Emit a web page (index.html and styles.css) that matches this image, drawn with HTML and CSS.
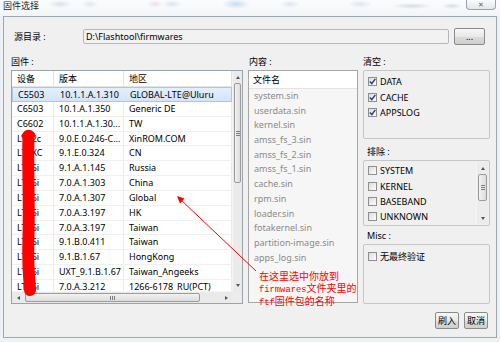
FILE: index.html
```html
<html>
    <head>
        <title>固件选择</title>
        <link rel="stylesheet" href="styles.css">
    </head>
    <body>
        <div class="window">
            <div class="titlebar">
                <span class="title">固件选择</span>
                <span class="close">✕</span>
            </div>
            <div class="panel">
                <div class="source_row">
                    <span class="source_label">源目录 :</span>
                    <div class="field">D:\Flashtool\firmwares</div>
                    <button class="btn browse">...</button>
                </div>

                <div class="columns">
                    <div class="col">
                        <div class="caption">固件 :</div>
                        <div class="fw_table">
                            <div class="fw_body">
                                <div class="fw_row fw_head"><span>设备</span><span>版本</span><span>地区</span></div>
                                <div class="fw_row selected"><span>C5503</span><span>10.1.1.A.1.310</span><span>GLOBAL-LTE@Uluru</span></div>
                                <div class="fw_row"><span>C6503</span><span>10.1.A.1.350</span><span>Generic DE</span></div>
                                <div class="fw_row"><span>C6602</span><span>10.1.1.A.1.30...</span><span>TW</span></div>
                                <div class="fw_row"><span>LT22c</span><span>9.0.E.0.246-C...</span><span>XinROM.COM</span></div>
                                <div class="fw_row"><span>LT2XC</span><span>9.1.E.0.324</span><span>CN</span></div>
                                <div class="fw_row"><span>LT26i</span><span>9.1.A.1.145</span><span>Russia</span></div>
                                <div class="fw_row"><span>LT26i</span><span>7.0.A.1.303</span><span>China</span></div>
                                <div class="fw_row"><span>LT26i</span><span>7.0.A.1.307</span><span>Global</span></div>
                                <div class="fw_row"><span>LT26i</span><span>7.0.A.3.197</span><span>HK</span></div>
                                <div class="fw_row"><span>LT26i</span><span>7.0.A.3.197</span><span>Taiwan</span></div>
                                <div class="fw_row"><span>LT26i</span><span>9.1.B.0.411</span><span>Taiwan</span></div>
                                <div class="fw_row"><span>LT26i</span><span>9.1.B.1.67</span><span>HongKong</span></div>
                                <div class="fw_row"><span>LT26i</span><span>UXT_9.1.B.1.67</span><span>Taiwan_Angeeks</span></div>
                                <div class="fw_row"><span>LT26i</span><span>7.0.A.3.212</span><span>1266-6178_RU(PCT)</span></div>
                            </div>
                            <div class="vscroll">
                                <span class="arrow"><i class="tri up"></i></span>
                                <span class="thumb vthumb"><i class="grip"></i></span>
                                <span class="track"></span>
                                <span class="arrow"><i class="tri down"></i></span>
                            </div>
                            <div class="hscroll">
                                <span class="arrow"><i class="tri left"></i></span>
                                <span class="thumb hthumb"><i class="grip"></i></span>
                                <span class="track"></span>
                                <span class="arrow"><i class="tri right"></i></span>
                            </div>
                            <div class="corner"></div>
                        </div>
                    </div>

                    <div class="col">
                        <div class="caption mid">内容 :</div>
                        <div class="file_list">
                            <div class="file_head">文件名</div>
                            <div class="file">system.sin</div>
                            <div class="file">userdata.sin</div>
                            <div class="file">kernel.sin</div>
                            <div class="file">amss_fs_3.sin</div>
                            <div class="file">amss_fs_2.sin</div>
                            <div class="file">amss_fs_1.sin</div>
                            <div class="file">cache.sin</div>
                            <div class="file">rpm.sin</div>
                            <div class="file">loader.sin</div>
                            <div class="file">fotakernel.sin</div>
                            <div class="file">partition-image.sin</div>
                            <div class="file">apps_log.sin</div>
                        </div>
                    </div>

                    <div class="col">
                        <div class="caption">清空 :</div>
                        <div class="box box_wipe">
                            <div class="check"><span class="cb"><svg width="7" height="7" viewBox="0 0 7 7"><path d="M0.8 3.6 L2.8 5.6 L6.3 0.8" fill="none" stroke="#26388c" stroke-width="1.4"/></svg></span>DATA</div>
                            <div class="check"><span class="cb"><svg width="7" height="7" viewBox="0 0 7 7"><path d="M0.8 3.6 L2.8 5.6 L6.3 0.8" fill="none" stroke="#26388c" stroke-width="1.4"/></svg></span>CACHE</div>
                            <div class="check"><span class="cb"><svg width="7" height="7" viewBox="0 0 7 7"><path d="M0.8 3.6 L2.8 5.6 L6.3 0.8" fill="none" stroke="#26388c" stroke-width="1.4"/></svg></span>APPSLOG</div>
                        </div>
                        <div class="caption cap_exclude">排除 :</div>
                        <div class="box box_exclude">
                            <div class="exclude_items">
                                <div class="check"><span class="cb"></span>SYSTEM</div>
                                <div class="check"><span class="cb"></span>KERNEL</div>
                                <div class="check"><span class="cb"></span>BASEBAND</div>
                                <div class="check"><span class="cb"></span>UNKNOWN</div>
                            </div>
                            <div class="vscroll small">
                                <span class="arrow"><i class="tri up"></i></span>
                                <span class="thumb sthumb"><i class="grip"></i></span>
                                <span class="track"></span>
                                <span class="arrow"><i class="tri down"></i></span>
                            </div>
                        </div>
                        <div class="caption cap_misc">Misc :</div>
                        <div class="box box_misc">
                            <div class="check"><span class="cb"></span>无最终验证</div>
                        </div>
                    </div>
                </div>

                <div class="actions">
                    <button class="btn action">刷入</button>
                    <button class="btn action">取消</button>
                </div>
            </div>

            <!-- red markup drawn over the screenshot -->
            <svg class="markup" width="500" height="342" viewBox="0 0 500 342">
                <path d="M28.5 136 C27.5 165 29.5 200 28.5 235 S29 270 30 290" fill="none" stroke="#ff0000" stroke-width="12" stroke-linecap="round"/>
                <path d="M24 136 Q28 129 33 135" fill="none" stroke="#ff0000" stroke-width="5" stroke-linecap="round"/>
                <line x1="256" y1="271" x2="180" y2="199" stroke="#ff0000" stroke-width="1"/>
                <polygon points="177,196 180,203.5 184.5,198.5" fill="#ff0000"/>
            </svg>
            <div class="note">在这里选中你放到<br><span class="mono">firmwares</span>文件夹里的<br><span class="mono">ftf</span>固件包的名称</div>
        </div>
    </body>
</html>
```

FILE: styles.css
```css
/**/

body {
    margin: 0;
    background: #eef2f6;
    font-family: "Noto Sans", "Noto Sans CJK SC", sans-serif;
    font-size: 9px;
    color: #000;
}

.window {
    position: relative;
    width: 500px;
    height: 342px;
    overflow: hidden;
    background: #edf1f5;
}

/* aero glass title */
.titlebar {
    height: 16px;
    display: flex;
    justify-content: space-between;
    align-items: flex-start;
    padding-left: 3px;
    background:
        radial-gradient(ellipse 12px 4px at 60px 4px, rgba(120,150,190,0.25), transparent),
        radial-gradient(ellipse 8px 4px at 90px 4px, rgba(120,150,190,0.2), transparent),
        radial-gradient(ellipse 8px 4px at 155px 4px, rgba(200,110,170,0.2), transparent),
        radial-gradient(ellipse 10px 4px at 172px 4px, rgba(90,140,210,0.2), transparent),
        radial-gradient(ellipse 14px 5px at 236px 4px, rgba(90,150,220,0.3), transparent),
        radial-gradient(ellipse 10px 4px at 290px 4px, rgba(120,150,200,0.2), transparent),
        radial-gradient(ellipse 12px 4px at 360px 4px, rgba(120,150,200,0.2), transparent),
        radial-gradient(ellipse 20px 3px at 412px 6px, rgba(120,130,150,0.25), transparent),
        radial-gradient(ellipse 10px 3px at 452px 6px, rgba(120,130,150,0.25), transparent),
        linear-gradient(#fbfcfd, #f2f5f8);
}

.title {
    line-height: 11px;
    color: #1e1e1e;
}

.close {
    width: 30px;
    height: 10px;
    margin-right: 4px;
    border: 1px solid #9aa3ad;
    border-top: none;
    border-radius: 0 0 4px 4px;
    background: linear-gradient(#f9fafb, #e2e7ec);
    font-size: 7px;
    line-height: 9px;
    text-align: center;
    color: #5d6670;
    box-sizing: border-box;
}

.panel {
    position: relative;
    margin: 0 3px;
    height: 322px;
    box-sizing: border-box;
    border: 1px solid #9ea7b1;
    background: #f0f0f0;
    padding: 11px 6px 8px 7px;
}

.source_row {
    height: 17px;
    display: flex;
    align-items: center;
}

.source_label {
    width: 69px;
    margin-left: 3px;
}

.field {
    width: 366px;
    height: 15px;
    box-sizing: border-box;
    border: 1px solid #b4b8be;
    border-radius: 2px;
    background: #f2f2f2;
    padding-left: 2px;
    line-height: 13px;
}

.btn {
    font-family: "Noto Sans", "Noto Sans CJK SC", sans-serif;
    font-size: 9px;
    padding: 0;
    box-sizing: border-box;
    border: 1px solid #8a8a8a;
    border-radius: 2px;
    background: linear-gradient(#f6f6f6 0%, #e9e9e9 50%, #dcdcdc 51%, #cfcfcf 100%);
    color: #000;
}

.browse {
    width: 31px;
    height: 17px;
    margin-left: 5px;
    line-height: 12px;
}

.columns {
    margin-top: 9px;
    display: grid;
    grid-template-columns: 232px 110px 127px;
    column-gap: 5px;
}

.caption {
    height: 16px;
    line-height: 15px;
}

.caption.mid {
    padding-left: 1px;
}

.cap_exclude {
    margin-top: 5px;
    padding-left: 4px;
}

.cap_misc {
    margin-top: 2px;
    padding-left: 4px;
}

/* firmware list */
.fw_table {
    height: 234px;
    box-sizing: border-box;
    border: 1px solid #9ba3ab;
    background: #fff;
    display: grid;
    grid-template-columns: 1fr 10px;
    grid-template-rows: 1fr 12px;
}

.fw_body {
    overflow: hidden;
}

.fw_row {
    display: grid;
    grid-template-columns: 42px 70px 1fr;
    height: 14.85px;
    line-height: 14px;
    box-sizing: border-box;
    border-bottom: 1px solid #f0f0f0;
}

.fw_row span {
    padding-left: 5px;
    border-right: 1px solid #ebebeb;
    white-space: nowrap;
    overflow: hidden;
}

.fw_head {
    height: 16px;
    line-height: 15px;
    border-bottom: 1px solid #e4e4e4;
}

.fw_head span {
    border-right-color: #e2e2e2;
}

.selected {
    background: linear-gradient(#e4effc, #d3e4fa);
    border: 1px solid #a9c6ec;
}

.selected span {
    border-right-color: transparent;
}

/* scrollbars */
.vscroll, .hscroll {
    display: flex;
    background: #eaeaea;
}

.vscroll {
    flex-direction: column;
    border-left: 1px solid #f4f4f4;
}

.hscroll {
    border-top: 1px solid #f4f4f4;
}

.arrow {
    flex: 0 0 12px;
    display: flex;
    align-items: center;
    justify-content: center;
}

.track {
    flex: 1;
}

.tri {
    width: 0;
    height: 0;
    border: 2.5px solid transparent;
}

.tri.up { border-bottom: 3px solid #555; border-top-width: 0; }
.tri.down { border-top: 3px solid #555; border-bottom-width: 0; }
.tri.left { border-right: 3px solid #555; border-left-width: 0; }
.tri.right { border-left: 3px solid #555; border-right-width: 0; }

.thumb {
    box-sizing: border-box;
    border: 1px solid #9b9b9b;
    border-radius: 2px;
    display: flex;
    align-items: center;
    justify-content: center;
}

.vthumb {
    height: 100px;
    margin: 0 1px;
    background: linear-gradient(to right, #f2f2f2, #dcdcdc);
}

.hthumb {
    width: 175px;
    margin: 1px 0 1px 1px;
    background: linear-gradient(#f2f2f2, #dcdcdc);
}

.vthumb .grip, .sthumb .grip {
    width: 4px;
    height: 5px;
    background: repeating-linear-gradient(#7d7d7d 0 1px, transparent 1px 2px);
}

.hthumb .grip {
    width: 5px;
    height: 4px;
    background: repeating-linear-gradient(to right, #7d7d7d 0 1px, transparent 1px 2px);
}

.corner {
    background: #ececec;
}

/* content list */
.file_list {
    height: 233px;
    box-sizing: border-box;
    border: 1px solid #a6a6a6;
    background: #f6f6f6;
    padding: 0 1px;
}

.file_head {
    height: 17px;
    line-height: 17px;
    padding-left: 4px;
    margin: 0 -1px;
    background: #fff;
    border-bottom: 1px solid #e2e2e2;
}

.file {
    height: 14.7px;
    line-height: 14px;
    padding-left: 4px;
    color: #8a8a8a;
}

/* option boxes */
.box {
    box-sizing: border-box;
    border: 1px solid #c6c6c6;
    border-radius: 2px;
}

.box_wipe {
    height: 69px;
    padding-top: 3px;
}

.box_exclude {
    height: 66px;
    display: flex;
    padding-top: 2px;
}

.exclude_items {
    flex: 1;
}

.vscroll.small {
    width: 11px;
    margin: -1px 1px 1px 0;
    background: #ececec;
}

.sthumb {
    height: 27px;
    margin: 0 1px;
    background: linear-gradient(to right, #f2f2f2, #dcdcdc);
}

.box_misc {
    height: 60px;
    padding-top: 4px;
}

.check {
    height: 15.4px;
    line-height: 15px;
    padding-left: 4px;
    display: flex;
    align-items: center;
}

.cb {
    width: 9px;
    height: 9px;
    box-sizing: border-box;
    border: 1px solid #8f8f8f;
    background: linear-gradient(135deg, #dcdcdc, #fdfdfd);
    margin-right: 3px;
    display: flex;
    align-items: center;
    justify-content: center;
}

.actions {
    margin-top: 8px;
    display: flex;
    justify-content: flex-end;
    gap: 5px;
    padding-right: 2px;
}

.action {
    width: 24px;
    height: 17px;
    line-height: 14px;
}

/* red annotation on top of the shot */
.markup {
    position: absolute;
    left: 0;
    top: 0;
    pointer-events: none;
}

.note {
    position: absolute;
    left: 259px;
    top: 271px;
    font-size: 10px;
    line-height: 11.5px;
    color: #ff0000;
    white-space: nowrap;
}

.mono {
    font-family: "Liberation Mono", monospace;
    font-size: 8.8px;
}
/**/
```
